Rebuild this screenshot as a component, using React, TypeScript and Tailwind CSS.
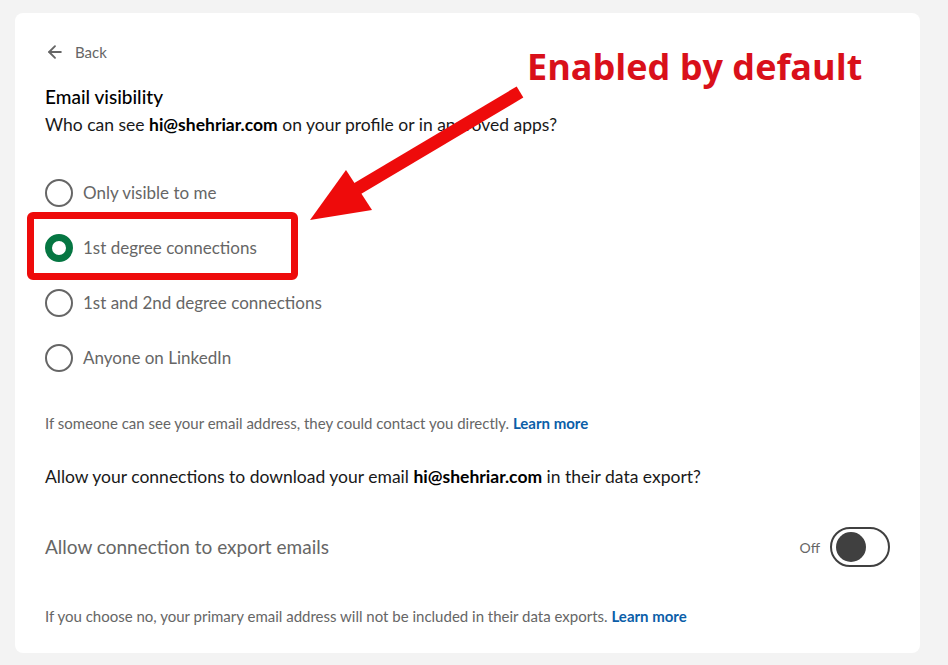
import { ArrowLeft } from 'lucide-react'

const options = [
  'Only visible to me',
  '1st degree connections',
  '1st and 2nd degree connections',
  'Anyone on LinkedIn',
]

function Radio({ checked }: { checked: boolean }) {
  if (checked) {
    return <span className="h-7 w-7 shrink-0 rounded-full border-[7px] border-[#057642] bg-white" />
  }
  return <span className="h-7 w-7 shrink-0 rounded-full border-2 border-[#666666] bg-white" />
}

export default function App() {
  return (
    <div
      className="relative h-[665px] w-[948px] overflow-hidden bg-[#f3f3f3] pt-[13px] pl-[15px]"
      style={{ fontFamily: 'Lato, "Noto Sans", sans-serif' }}
    >
      <div className="h-[640px] w-[905px] rounded-lg bg-white px-[30px] pt-[28px]">
        <button type="button" className="flex items-center gap-[10px] text-[15px] text-[#666666]">
          <ArrowLeft size={20} strokeWidth={2.25} />
          <span>Back</span>
        </button>

        <h2 className="mt-[21px] text-[19px] font-medium leading-6 text-black">Email visibility</h2>
        <p className="mt-[4px] text-[17.5px] leading-6 text-[#191919]">
          Who can see <strong className="font-bold text-black">hi@shehriar.com</strong> on your profile or in approved apps?
        </p>

        <div className="mt-[42px] flex flex-col gap-[27px]">
          {options.map((o, i) => (
            <label key={o} className="flex h-7 items-center gap-[10px] text-[17px] text-[#666666]">
              <Radio checked={i === 1} />
              <span>{o}</span>
            </label>
          ))}
        </div>

        <p className="mt-[40px] text-[15px] text-[#666666]">
          If someone can see your email address, they could contact you directly.{' '}
          <a className="font-bold text-[#0b5ea8]">Learn more</a>
        </p>

        <p className="mt-[30px] text-[17.5px] text-[#191919]">
          Allow your connections to download your email <strong className="font-bold text-black">hi@shehriar.com</strong> in their data export?
        </p>

        <div className="mt-[37px] flex items-center justify-between">
          <span className="text-[19px] text-[#666666]">Allow connection to export emails</span>
          <div className="flex items-center gap-[10px]">
            <span className="text-[14px] text-[#666666]">Off</span>
            <span className="flex h-10 w-[60px] items-center rounded-full border-2 border-[#404040] px-[4px]">
              <span className="h-[30px] w-[30px] rounded-full bg-[#404040]" />
            </span>
          </div>
        </div>

        <p className="mt-[38px] text-[15px] text-[#666666]">
          If you choose no, your primary email address will not be included in their data exports.{' '}
          <a className="font-bold text-[#0b5ea8]">Learn more</a>
        </p>
      </div>

      {/* annotation overlay */}
      <div className="pointer-events-none absolute left-[27px] top-[212px] h-[68px] w-[271px] rounded-md border-[7px] border-[#ee0b0b]" />
      <div
        className="pointer-events-none absolute left-[527px] top-[49px] text-[36px] font-bold leading-none text-[#d9101a]"
        style={{ fontFamily: '"Open Sans", sans-serif' }}
      >
        Enabled by default
      </div>
      <svg className="pointer-events-none absolute left-0 top-0" width="948" height="665">
        <line x1="520" y1="92" x2="345" y2="196" stroke="#ee0b0b" strokeWidth="13" />
        <polygon points="310,220 346,170 372,210" fill="#ee0b0b" />
      </svg>
    </div>
  )
}
